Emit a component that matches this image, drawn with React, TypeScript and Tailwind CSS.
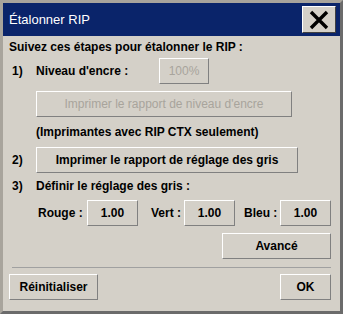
import React from "react";

function Btn({
  children,
  className = "",
  disabled = false,
}: {
  children: React.ReactNode;
  className?: string;
  disabled?: boolean;
}) {
  return (
    <div
      className={`flex h-[26px] items-center justify-center border border-t-white border-l-white border-r-[#808080] border-b-[#808080] bg-[#d4d0c8] ${
        disabled ? "text-[#a8a49c]" : "text-black"
      } ${className}`}
    >
      {children}
    </div>
  );
}

export default function App() {
  return (
    <div
      className="flex h-[314px] w-[343px] flex-col border-[3px] border-t-[#a8a49c] border-l-[#a8a49c] border-r-[#6b6b6b] border-b-[#6b6b6b] bg-[#d4d0c8] text-[12px] font-bold text-black"
      style={{ fontFamily: '"Liberation Sans", Arial, sans-serif' }}
    >
      {/* Title bar */}
      <div className="flex h-[33px] shrink-0 items-center justify-between bg-[#0a246a] pl-[6px] pr-[4px]">
        <span className="text-[13px] font-normal text-white">Étalonner RIP</span>
        <div className="flex h-[27px] w-[34px] items-center justify-center border border-t-white border-l-white border-r-[#404040] border-b-[#404040] bg-[#d4d0c8]">
          <svg width="22" height="20" viewBox="0 0 22 20">
            <path d="M3 2 L19 18 M19 2 L3 18" stroke="black" strokeWidth="3.4" />
          </svg>
        </div>
      </div>

      {/* Body */}
      <div className="flex flex-1 flex-col px-[6px] pt-[3px]">
        <div className="h-[16px] leading-[16px]">Suivez ces étapes pour étalonner le RIP :</div>

        <div className="mt-[3px] flex h-[26px] items-center">
          <span className="w-[27px] pl-[3px]">1)</span>
          <span className="w-[123px]">Niveau d'encre :</span>
          <Btn disabled className="w-[50px] font-normal">
            100%
          </Btn>
        </div>

        <Btn disabled className="ml-[27px] mt-[7px] w-[256px] font-normal">
          Imprimer le rapport de niveau d'encre
        </Btn>

        <div className="ml-[27px] mt-[7px] h-[16px] leading-[16px]">
          (Imprimantes avec RIP CTX seulement)
        </div>

        <div className="mt-[7px] flex items-center">
          <span className="w-[27px] pl-[3px]">2)</span>
          <Btn className="w-[262px]">Imprimer le rapport de réglage des gris</Btn>
        </div>

        <div className="mt-[5px] flex h-[16px] items-center">
          <span className="w-[27px] pl-[3px]">3)</span>
          <span>Définir le réglage des gris :</span>
        </div>

        <div className="mt-[6px] flex items-center">
          <span className="ml-[29px] w-[49px]">Rouge :</span>
          <Btn className="w-[51px]">1.00</Btn>
          <span className="ml-[13px] w-[33px]">Vert :</span>
          <Btn className="w-[51px]">1.00</Btn>
          <span className="ml-[9px] w-[36px]">Bleu :</span>
          <Btn className="w-[51px]">1.00</Btn>
        </div>

        <div className="mt-[7px] flex justify-end pr-[3px]">
          <Btn className="w-[109px]">Avancé</Btn>
        </div>

        <div className="mx-[3px] mt-[8px] h-px bg-[#a0a0a0]" />

        <div className="mt-[6px] flex justify-between pr-[3px]">
          <Btn className="w-[89px]">Réinitialiser</Btn>
          <Btn className="w-[51px]">OK</Btn>
        </div>
      </div>
    </div>
  );
}
